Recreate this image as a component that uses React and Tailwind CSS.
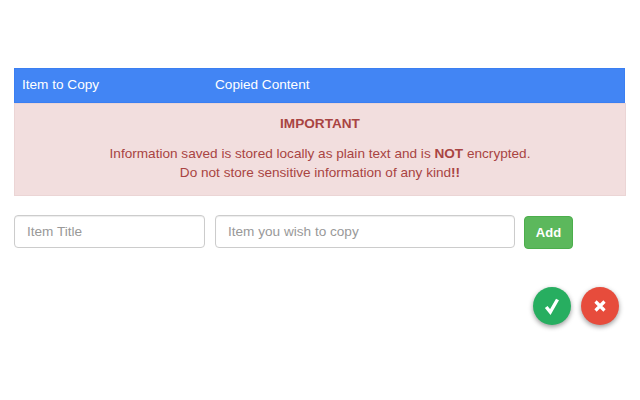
import React from 'react';

const App = () => {
  return (
    <div className="w-[640px] h-[400px] bg-white overflow-hidden pt-[68px] pl-[14px] font-['Liberation_Sans',Arial,sans-serif]">
      <div className="w-[612px]">
        <div className="flex items-center w-[611px] h-[35px] bg-[#4285f4] border border-[#3b7ff2] text-white text-[13.6px] pl-[7px]">
          <div className="w-[193px]">Item to Copy</div>
          <div>Copied Content</div>
        </div>
        <div className="h-[93px] bg-[#f2dede] border border-[#ebd5d5] text-[#a94442] text-[13.6px] text-center pt-[10px]">
          <div className="font-bold leading-[20px]">IMPORTANT</div>
          <p className="mt-[10px] leading-[19px]">
            Information saved is stored locally as plain text and is <b>NOT</b> encrypted.
            <br />
            Do not store sensitive information of any kind<b>!!</b>
          </p>
        </div>
      </div>

      <div className="flex items-start mt-[19px]">
        <input
          type="text"
          placeholder="Item Title"
          className="w-[191px] h-[33px] px-[12px] bg-white border border-[#ccc] rounded-[4px] text-[13.6px] placeholder:text-[#999] outline-none shadow-[inset_0_1px_1px_rgba(0,0,0,0.075)]"
        />
        <input
          type="text"
          placeholder="Item you wish to copy"
          className="w-[300px] h-[33px] ml-[10px] px-[12px] bg-white border border-[#ccc] rounded-[4px] text-[13.6px] placeholder:text-[#999] outline-none shadow-[inset_0_1px_1px_rgba(0,0,0,0.075)]"
        />
        <button className="w-[49px] h-[33px] ml-[9px] mt-[1px] bg-[#5cb85c] border border-[#4cae4c] rounded-[4px] text-white text-[13px] font-bold">
          Add
        </button>
      </div>

      <div className="flex justify-end w-[605px] gap-[10px] mt-[38px]">
        <button className="w-[38px] h-[38px] rounded-full bg-[#27ae60] text-white flex items-center justify-center shadow-[0_2px_5px_rgba(0,0,0,0.4)]">
          <svg width="18" height="18" viewBox="0 0 18 18" fill="none">
            <path d="M3.2 10 L7.3 15 L14.5 2.5" stroke="white" strokeWidth="3.4" strokeLinejoin="miter" />
          </svg>
        </button>
        <button className="w-[38px] h-[38px] rounded-full bg-[#e74c3c] text-white flex items-center justify-center shadow-[0_2px_5px_rgba(0,0,0,0.4)]">
          <svg width="12" height="12" viewBox="0 0 12 12" fill="none">
            <path d="M1.5 1.5 L10.5 10.5 M10.5 1.5 L1.5 10.5" stroke="white" strokeWidth="3.2" />
          </svg>
        </button>
      </div>
    </div>
  );
};

export default App;
